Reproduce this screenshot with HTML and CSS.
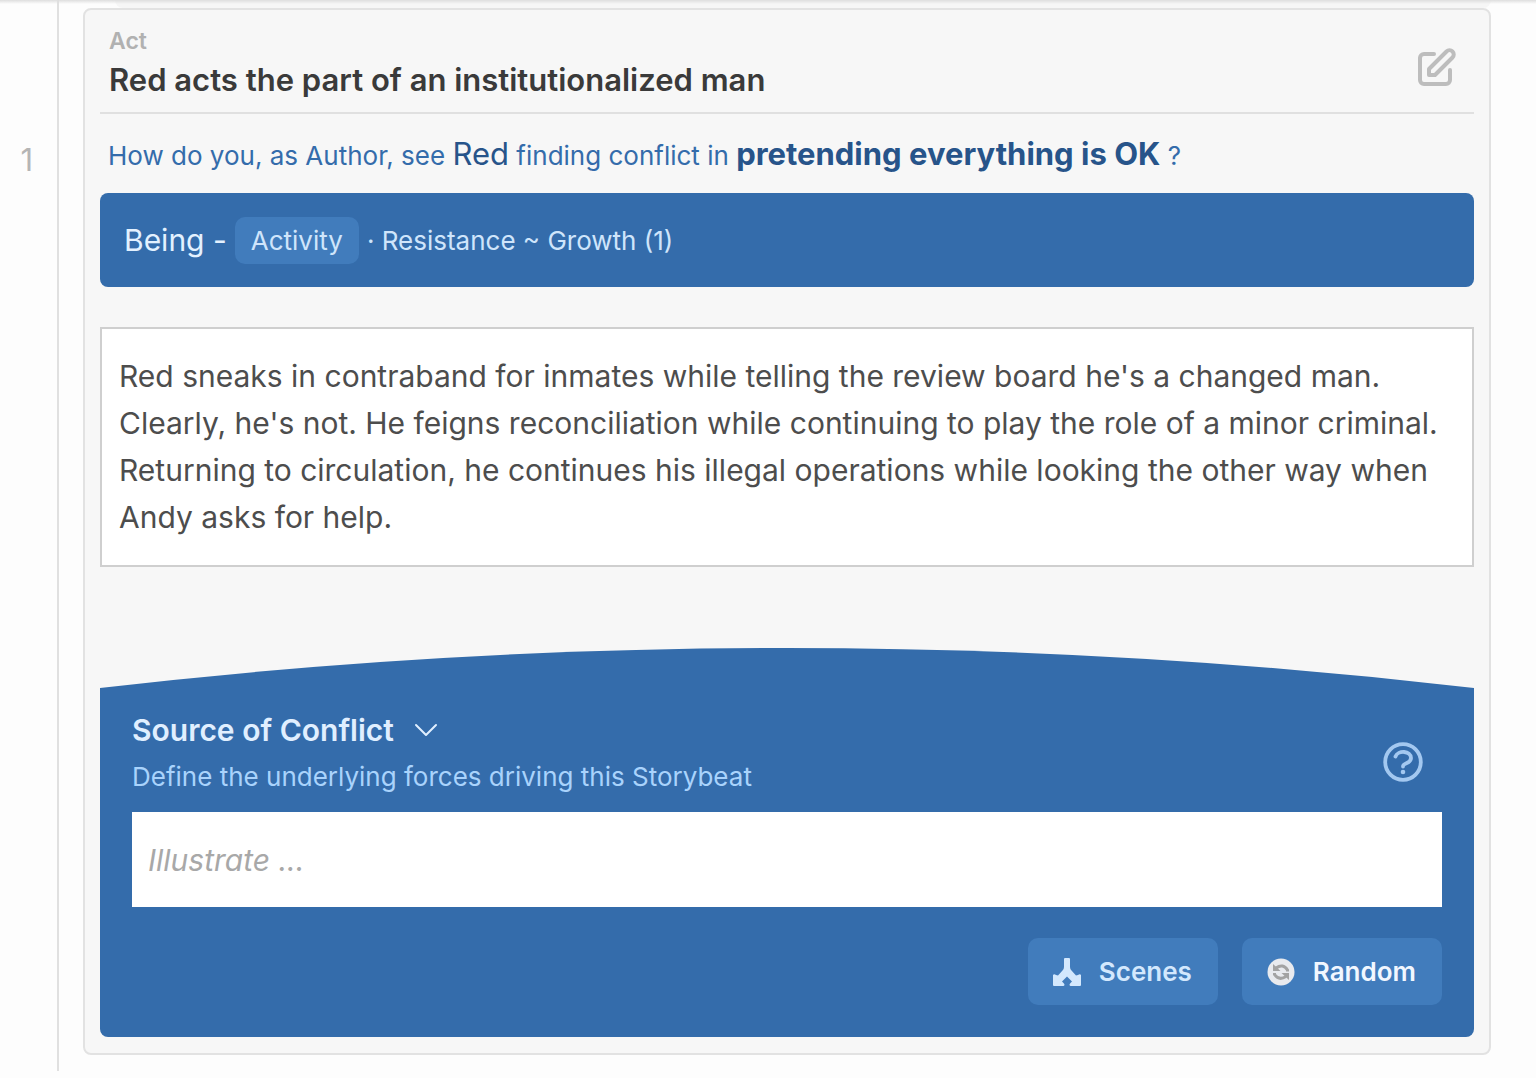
FILE: index.html
```html
<!DOCTYPE html>
<html lang="en">
<head>
<meta charset="utf-8">
<meta name="viewport" content="width=device-width, initial-scale=1">
<title>Storybeat</title>
<link rel="stylesheet" href="styles.css">
</head>
<body>
<div class="scroll-edge"></div>
<main class="timeline">
  <div class="rail"><span class="rail-number">1</span></div>
  <div class="beats">
    <div class="previous-card"></div>
    <article class="card">
      <header class="card-header">
        <div>
          <p class="kind">Act</p>
          <h2 class="title">Red acts the part of an institutionalized man</h2>
        </div>
        <button class="icon-button edit" type="button" aria-label="Edit">
          <svg class="edit-icon" viewBox="0 0 40 40" fill="none" stroke="currentColor" stroke-width="4" stroke-linejoin="round" stroke-linecap="round">
            <path d="M18 6H8a4 4 0 0 0-4 4v22a4 4 0 0 0 4 4h22a4 4 0 0 0 4-4V22"/>
            <path d="M13 27v-6L30.500 3.500a4.200 4.200 0 0 1 6 6L19 27z"/>
          </svg>
        </button>
      </header>
      <p class="question">How do you, as Author, see <span class="who">Red</span> finding conflict in <strong class="what">pretending everything is OK</strong> ?</p>
      <div class="appreciation">
        <span class="being">Being -</span>
        <span class="tag">Activity</span>
        <span class="detail">· Resistance ~ Growth (1)</span>
      </div>
      <textarea class="summary" rows="4" aria-label="Storybeat summary">Red sneaks in contraband for inmates while telling the review board he's a changed man. Clearly, he's not. He feigns reconciliation while continuing to play the role of a minor criminal. Returning to circulation, he continues his illegal operations while looking the other way when Andy asks for help.</textarea>
      <section class="source">
        <svg class="curve" viewBox="0 0 100 40" preserveAspectRatio="none" aria-hidden="true"><path d="M0 41V40Q50-40 100 40v1z"/></svg>
        <div class="panel">
          <div class="panel-header">
            <div>
              <h3 class="panel-title">Source of Conflict
                <svg class="chevron" viewBox="0 0 24 16" fill="none" stroke="currentColor" stroke-width="2" stroke-linecap="round" stroke-linejoin="round"><path d="M2 3l10 10L22 3"/></svg>
              </h3>
              <label class="panel-label" for="illustrate">Define the underlying forces driving this Storybeat</label>
            </div>
            <button class="icon-button help" type="button" aria-label="Help">
              <svg class="help-icon" viewBox="0 0 40 40" fill="none" stroke="currentColor" stroke-width="3.800" stroke-linecap="round" stroke-linejoin="round">
                <circle cx="20" cy="20" r="17.800"/>
                <path d="M12.500 14.500C15 8 28 8.500 28 16c0 6-8 4.500-8 8.500"/>
                <circle cx="20" cy="30" r="2.300" fill="currentColor" stroke="none"/>
              </svg>
            </button>
          </div>
          <input class="illustrate" id="illustrate" type="text" placeholder="Illustrate ...">
          <div class="actions">
            <button class="action scenes" type="button">
              <svg class="action-icon" viewBox="0 0 28 28" fill="currentColor"><path d="M11 1q0-1 1-1h4q1 0 1 1v8q0 2 1.500 3.500l4.500 5L25 17q2-1.500 3 0v10q0 1-1 1h-9.500q-2-1 0-3l1.500-1.500-5-5-5 5 1.500 1.500q2 2 0 3H1q-1 0-1-1V17q1-1.500 3 0l2 .5 4.500-5Q11 11 11 9z"/></svg>
              Scenes
            </button>
            <button class="action random" type="button">
              <svg class="action-icon" viewBox="0 0 28 28"><circle cx="14" cy="14" r="13.500" fill="#e8eaee"/><g fill="none" stroke="#a3a3a3" stroke-width="3"><path d="M9 10q7-5 11.500 2v1.500"/><path d="M19 18.500q-7 4.500-11.500-2V15"/></g><path fill="#a3a3a3" d="M6 6v7h7.500zM22 22v-7h-7.500z"/></svg>
              Random
            </button>
          </div>
        </div>
      </section>
    </article>
  </div>
</main>
</body>
</html>
```
FILE: styles.css
```css
* { box-sizing: border-box; }

body {
  margin: 0;
  background: #fdfdfd;
  color: #4a4a4a;
  font-family: Inter, "Liberation Sans", sans-serif;
  font-size: 26px;
}

h2, h3, p { margin: 0; }
button, input, textarea { font: inherit; }
svg { display: block; }

.scroll-edge {
  position: absolute;
  top: 0;
  left: 0;
  right: 0;
  height: 4px;
  background: linear-gradient(#dedede, #dedede00);
}

.timeline { display: flex; }

.rail {
  flex: none;
  width: 59px;
  margin-bottom: 8px;
  padding: 140px 24px 0 0;
  border-right: 2px solid #e0e0e0;
  text-align: right;
}

.rail-number { font-size: 31px; line-height: 40px; color: #b5b5b5; }

.beats {
  flex: 1;
  min-width: 0;
  padding: 0 45px 24px 24px;
}

.previous-card {
  height: 8px;
  margin-left: 32px;
  border-radius: 0 0 8px 8px;
  background: #f6f6f6;
}

.card {
  padding: 16px 15px;
  border: 2px solid #e2e2e2;
  border-radius: 8px;
  background: #f7f7f7;
}

.card-header {
  display: flex;
  justify-content: space-between;
  align-items: center;
  padding: 0 18px 8px 9px;
  border-bottom: 2px solid #e0e0e0;
}

.kind { font-size: 23px; font-weight: 600; line-height: 30px; color: #b1b1b1; }
.title { font-size: 31px; font-weight: 600; line-height: 48px; color: #3a3a3a; }

.icon-button {
  flex: none;
  padding: 0;
  border: 0;
  background: none;
  color: #bdbdbd;
}

.edit { margin-top: 6px; }
.edit-icon, .help-icon { width: 40px; height: 40px; }

.question {
  padding: 16px 8px 13px;
  line-height: 48px;
  color: #346cab;
}

.who { font-size: 31px; color: #27548a; }
.what { font-size: 31px; font-weight: 700; color: #27548a; }

.appreciation {
  display: flex;
  align-items: center;
  gap: 8px;
  height: 94px;
  padding: 0 24px;
  border-radius: 8px;
  background: #346cab;
  color: #cfe5fb;
}

.being { font-size: 30px; color: #e3f1ff; }

.tag {
  padding: 0 16px;
  border-radius: 10px;
  background: #417cbc;
  line-height: 47px;
}

.summary {
  display: block;
  width: 100%;
  margin-top: 40px;
  padding: 24px 17px;
  border: 2px solid #cfcfcf;
  border-radius: 0;
  background: #fff;
  color: #4d4d4d;
  font-size: 30px;
  line-height: 47px;
  resize: none;
  overflow: hidden;
}

.source { margin-top: 81px; }
.curve { width: 100%; height: 40px; fill: #346cab; }

.panel {
  padding: 18px 32px 32px;
  border-radius: 0 0 8px 8px;
  background: #346cab;
}

.panel-header {
  display: flex;
  justify-content: space-between;
  align-items: center;
}

.panel-title {
  display: flex;
  align-items: center;
  gap: 20px;
  font-size: 30px;
  font-weight: 600;
  line-height: 48px;
  color: #e0efff;
}

.chevron { width: 24px; height: 16px; }

.panel-label { display: block; line-height: 46px; color: #a9d3fc; }
.help { margin: 18px 19px 0 0; color: #a3c8f0; }

.illustrate {
  display: block;
  width: 100%;
  height: 95px;
  margin-top: 12px;
  padding: 0 16px;
  border: 0;
  border-radius: 0;
  background: #fff;
  font-size: 30px;
}

.illustrate::placeholder { color: #a8a8a8; font-style: italic; opacity: 1; }

.actions {
  display: flex;
  justify-content: flex-end;
  gap: 24px;
  margin-top: 31px;
}

.action {
  display: flex;
  align-items: center;
  gap: 18px;
  height: 67px;
  padding: 0 26px 0 25px;
  border: 0;
  border-radius: 10px;
  background: #417cbc;
  font-weight: 600;
}

.scenes { color: #d3e8fd; }
.random { color: #f1f7ff; }
.action-icon { width: 28px; height: 28px; }
```
